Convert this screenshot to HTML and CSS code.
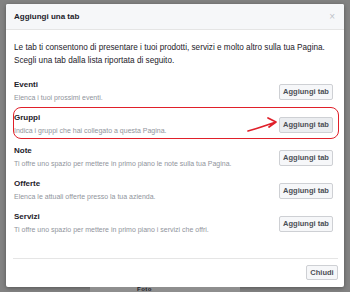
FILE: index.html
```html
<!DOCTYPE html>
<html lang="it">
<head>
<meta charset="utf-8">
<link rel="stylesheet" href="styles.css">
</head>
<body>
<div class="modal">
  <div class="modal-header">
    <span class="modal-title">Aggiungi una tab</span>
    <span class="close">×</span>
  </div>
  <div class="modal-body">
    <p class="intro">Le tab ti consentono di presentare i tuoi prodotti, servizi e molto altro sulla tua Pagina.<br>Scegli una tab dalla lista riportata di seguito.</p>
    <div class="list">
      <div class="row">
        <div class="info"><div class="name">Eventi</div><div class="desc">Elenca i tuoi prossimi eventi.</div></div>
        <button class="btn">Aggiungi tab</button>
      </div>
      <div class="row highlighted">
        <div class="info"><div class="name">Gruppi</div><div class="desc">Indica i gruppi che hai collegato a questa Pagina.</div></div>
        <svg class="arrow" width="34" height="20" viewBox="0 0 34 20"><path d="M2 16 C 10 14, 18 11, 30 7 M22 3 L30 7 L23 12" fill="none" stroke="#e0202a" stroke-width="1.7" stroke-linecap="round" stroke-linejoin="round"/></svg>
        <button class="btn">Aggiungi tab</button>
        <div class="ring"></div>
      </div>
      <div class="row">
        <div class="info"><div class="name">Note</div><div class="desc">Ti offre uno spazio per mettere in primo piano le note sulla tua Pagina.</div></div>
        <button class="btn">Aggiungi tab</button>
      </div>
      <div class="row">
        <div class="info"><div class="name">Offerte</div><div class="desc">Elenca le attuali offerte presso la tua azienda.</div></div>
        <button class="btn">Aggiungi tab</button>
      </div>
      <div class="row">
        <div class="info"><div class="name">Servizi</div><div class="desc">Ti offre uno spazio per mettere in primo piano i servizi che offri.</div></div>
        <button class="btn">Aggiungi tab</button>
      </div>
    </div>
  </div>
  <div class="modal-footer">
    <button class="btn close-btn">Chiudi</button>
  </div>
</div>
<div class="under">
  <div class="under-tab"><span class="under-label">Foto</span></div>
</div>
</body>
</html>
```
FILE: styles.css
```css
* { box-sizing: border-box; }
html, body { margin: 0; height: 100%; }
body {
  background: #828282;
  font-family: "Liberation Sans", Arial, sans-serif;
  padding: 4px 6px 0 6px;
  overflow: hidden;
}
.modal {
  width: 338px;
  height: 283px;
  background: #fff;
  border-radius: 2px;
  box-shadow: 0 1px 4px rgba(0,0,0,0.35);
  display: flex;
  flex-direction: column;
}
.modal-header {
  height: 26px;
  flex: none;
  background: #f6f7f9;
  border-bottom: 1px solid #e5e5e5;
  border-radius: 2px 2px 0 0;
  display: flex;
  align-items: center;
  justify-content: space-between;
  padding: 0 8px;
}
.modal-title {
  font-size: 8px;
  font-weight: bold;
  color: #1d2129;
}
.close {
  font-size: 10px;
  color: #bec2c9;
  line-height: 1;
  margin-right: 1px;
}
.modal-body {
  flex: 1;
  padding: 12px 8px 0 8px;
}
.intro {
  margin: 0;
  font-size: 8.2px;
  line-height: 12.5px;
  color: #1d2129;
  white-space: nowrap;
}
.list {
  margin-top: 8px;
  padding-right: 3px;
}
.row {
  position: relative;
  display: flex;
  align-items: center;
  height: 33px;
}
.info { flex: 1; }
.name {
  font-size: 8px;
  line-height: 13px;
  color: #1d2129;
  font-weight: bold;
}
.desc {
  font-size: 7px;
  line-height: 14px;
  color: #90949c;
}
.btn {
  font-family: "Liberation Sans", Arial, sans-serif;
  font-size: 7.5px;
  font-weight: bold;
  color: #4b4f56;
  background: #f6f7f9;
  border: 1px solid #ced0d4;
  border-radius: 2px;
  height: 16px;
  width: 54px;
  padding: 0;
  margin: 0;
  white-space: nowrap;
}
.highlighted .btn { background: #ebedf0; }
.arrow {
  position: absolute;
  right: 53px;
  top: 7px;
}
.ring {
  position: absolute;
  left: -1px;
  right: -6px;
  top: -1.5px;
  bottom: 2.5px;
  border: 1.6px solid #e0202a;
  border-radius: 8px;
  pointer-events: none;
}
.modal-footer {
  flex: none;
  margin: 0 6px 0 7px;
  border-top: 1px solid #e5e5e5;
  display: flex;
  justify-content: flex-end;
  padding: 6px 0 7px;
}
.close-btn { height: 15px; width: 32px; }
.under {
  height: 5px;
  display: flex;
  padding-left: 84px;
}
.under-tab {
  width: 150px;
  background: #8e8e8e;
  padding-left: 47px;
  display: flex;
  align-items: flex-end;
}
.under-label {
  font-size: 6px;
  font-weight: bold;
  color: #1d2129;
  line-height: 5px;
  letter-spacing: 0.5px;
}
```
